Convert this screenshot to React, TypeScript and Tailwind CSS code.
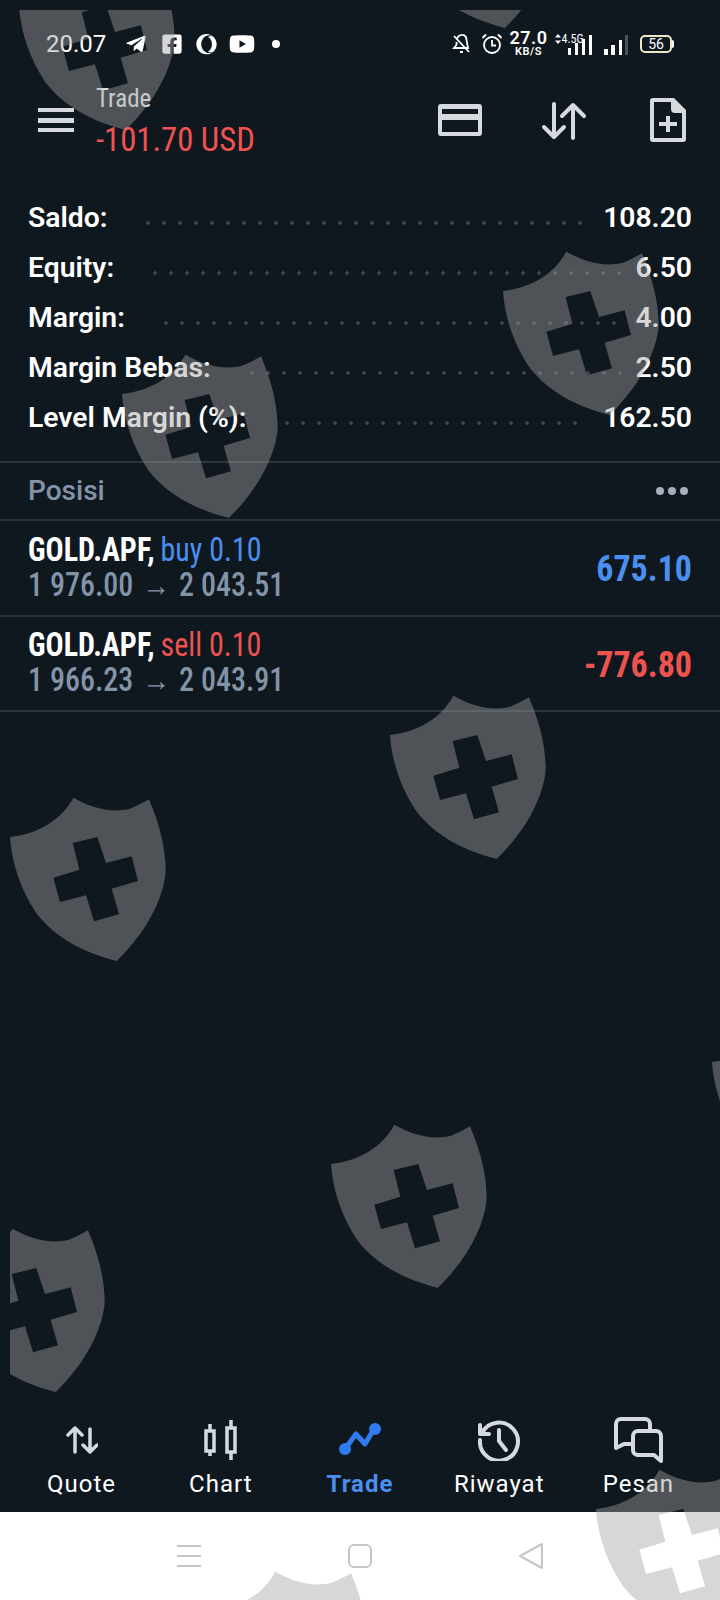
import { FaFacebookSquare, FaOpera, FaTelegramPlane, FaYoutube } from 'react-icons/fa';

const shieldSpots = [
  'left-[-1px] top-[-59px]',
  'left-[378px] top-[-161px]',
  'left-[483px] top-[226px]',
  'left-[102px] top-[329px]',
  'left-[370px] top-[670px]',
  'left-[-10px] top-[772px]',
  'left-[311px] top-[1099px]',
  'left-[-71px] top-[1203px]',
  'left-[692px] top-[997px]',
  'left-[576px] top-[1444px]',
  'left-[192px] top-[1546px]',
];

const account = [
  { label: 'Saldo:', value: '108.20' },
  { label: 'Equity:', value: '6.50' },
  { label: 'Margin:', value: '4.00' },
  { label: 'Margin Bebas:', value: '2.50' },
  { label: 'Level Margin (%):', value: '162.50' },
];

const positions = [
  { side: 'buy 0.10', prices: '1 976.00', now: '2 043.51', profit: '675.10', color: 'text-[#4a8ff0]' },
  { side: 'sell 0.10', prices: '1 966.23', now: '2 043.91', profit: '-776.80', color: 'text-[#ef5350]' },
];

function Shield({ className }: { className: string }) {
  return (
    <svg viewBox="0 0 540 570" className={`absolute h-[190px] w-[180px] ${className}`}>
      <path
        fillRule="evenodd"
        fill="#a3a3a3"
        fillOpacity="0.43"
        d="M30 165C110 155 180 120 220 47C270 75 330 95 390 80C410 72 430 62 447 52C480 130 497 200 497 270C490 350 440 450 350 537C250 510 170 470 110 395C60 320 35 240 30 165ZM218 183L292 165L318 243L395 223L414 297L335 320L357 397L282 418L258 340L180 360L160 287L238 263Z"
      />
    </svg>
  );
}

function StatusBar() {
  return (
    <div className="flex h-[88px] items-center pl-[46px] pr-[46px] text-white">
      <span className="text-[24px] leading-none font-normal">20.07</span>
      <div className="ml-[19px] flex items-center">
        <FaTelegramPlane className="h-[22px] w-[22px]" />
        <FaFacebookSquare className="ml-[14px] h-[22px] w-[22px]" />
        <FaOpera className="ml-[13px] h-[21px] w-[21px]" />
        <FaYoutube className="ml-[12px] h-[26px] w-[26px]" />
        <span className="ml-[17px] h-[8px] w-[8px] rounded-full bg-white" />
      </div>
      <div className="ml-auto flex items-center">
        <svg viewBox="0 0 20 22" className="h-[22px] w-[20px]" fill="none" stroke="white" strokeWidth="1.8">
          <path d="M5 7a5 5 0 0 1 9-3l2 11H2l2.500-3V9M8 19h3M2 3l15 16" />
        </svg>
        <svg viewBox="0 0 22 22" className="ml-[9px] h-[22px] w-[22px]" fill="none" stroke="white" strokeWidth="1.8">
          <circle cx="11" cy="12" r="8" />
          <path d="M11 7v5.500h4M1.500 5 5 1.500M20.500 5 17 1.500" />
        </svg>
        <div className="mb-[2px] ml-[9px] flex w-[34px] flex-col items-center font-semibold leading-none">
          <span className="text-[18px] leading-[17px] tracking-[0.5px]">27.0</span>
          <span className="text-[11px] leading-[11px] tracking-[0.5px]">KB/S</span>
        </div>
        <div className="relative ml-[9px] h-[22px] w-[37px]">
          <svg viewBox="0 0 6 10" className="absolute left-0 top-[1px] h-[10px] w-[6px]" fill="white">
            <path d="M3 0 6 3.500H0ZM3 10 0 6.500H6Z" />
          </svg>
          <span className="absolute left-[7px] top-0 text-[12px] leading-[12px] [font-stretch:condensed]">4.5G</span>
          <div className="absolute bottom-0 right-0 flex items-end gap-[4px]">
            <span className="h-[7px] w-[3px] bg-white" />
            <span className="h-[12px] w-[3px] bg-white" />
            <span className="h-[16px] w-[3px] bg-white" />
            <span className="h-[20px] w-[3px] bg-white" />
          </div>
        </div>
        <div className="ml-[12px] flex h-[22px] items-end gap-[3.500px]">
          <span className="h-[6px] w-[4px] bg-white" />
          <span className="h-[10px] w-[4px] bg-white" />
          <span className="h-[15px] w-[3px] bg-white" />
          <span className="h-[20px] w-[3px] bg-[#4a5058]" />
        </div>
        <div className="ml-[12px] flex items-center">
          <div className="flex h-[18px] w-[32px] items-center justify-center rounded-[5px] border-2 border-[#f0e6c8] text-[14px] leading-none">
            56
          </div>
          <span className="h-[8px] w-[2px] rounded-r bg-white" />
        </div>
      </div>
    </div>
  );
}

function Header() {
  return (
    <div className="flex h-[105px] items-start pl-[38px] pr-[34px]">
      <div className="mt-[20px] flex w-[36px] flex-col gap-[5.500px]">
        <span className="h-[4px] bg-[#d6dade]" />
        <span className="h-[5px] bg-[#d6dade]" />
        <span className="h-[4px] bg-[#d6dade]" />
      </div>
      <div className="ml-[22px] flex flex-col">
        <span className="text-[25px] leading-[22px] text-[#e2e5e8] [font-stretch:condensed]">Trade</span>
        <span className="mt-[13px] origin-left scale-x-[0.99] text-[33px] leading-[34px] text-[#ef5350] [font-stretch:condensed]">
          -101.70 USD
        </span>
      </div>
      <div className="ml-auto mt-[10px] flex items-start">
        <svg viewBox="0 0 44 32" className="mt-[6px] h-[32px] w-[44px]">
          <path
            fill="#d6dade"
            fillRule="evenodd"
            d="M3 0h38a3 3 0 0 1 3 3v26a3 3 0 0 1-3 3H3a3 3 0 0 1-3-3V3a3 3 0 0 1 3-3ZM4 5v5h36V5ZM4 16v12h36V16Z"
          />
        </svg>
        <svg
          viewBox="0 0 46 38"
          className="ml-[59px] mt-[4px] h-[38px] w-[46px]"
          fill="none"
          stroke="#d6dade"
          strokeWidth="4"
          strokeLinecap="round"
          strokeLinejoin="round"
        >
          <path d="M13 2v33M3 25l10 10 10-10M32 36V3M21 14 32 3l11 11" />
        </svg>
        <svg viewBox="0 0 36 44" className="ml-[63px] h-[44px] w-[36px]">
          <path
            fill="#d6dade"
            fillRule="evenodd"
            d="M3 0h21l12 12v29a3 3 0 0 1-3 3H3a3 3 0 0 1-3-3V3a3 3 0 0 1 3-3ZM4 4v36h28V15H25a4 4 0 0 1-4-4V4ZM16 18h4v6h7v4h-7v6h-4v-6H9v-4h7Z"
          />
        </svg>
      </div>
    </div>
  );
}

function AccountRow({ label, value }: { label: string; value: string }) {
  return (
    <div className="flex h-[50px] items-center text-[28.300px] font-semibold leading-none text-white [font-stretch:88%]">
      <span>{label}</span>
      <span className="ml-[33px] mr-[14px] mt-[9px] h-[4px] flex-1 bg-[radial-gradient(circle,#3d4650_1.500px,transparent_2px)] bg-[length:16px_4px] bg-repeat-x" />
      <span>{value}</span>
    </div>
  );
}

function PositionRow({ side, prices, now, profit, color }: (typeof positions)[number]) {
  return (
    <div className="flex h-[95.500px] items-center justify-between border-b-2 border-[#2c353e] pl-[28px] pr-[28px] pt-[1px]">
      <div className="flex origin-left scale-y-[1.08] flex-col text-[30px] leading-[32px] [font-stretch:condensed]">
        <div>
          <span className="font-bold text-white">GOLD.APF,</span>
          <span className={`ml-[6px] ${color}`}>{side}</span>
        </div>
        <div className="font-medium text-[#8494a8]">
          {prices} <span className="mx-[2px] text-[28px]">→</span> {now}
        </div>
      </div>
      <span className={`origin-right scale-y-[1.1] text-[34px] font-bold leading-none [font-stretch:condensed] ${color}`}>
        {profit}
      </span>
    </div>
  );
}

function Tab({ label, active, children }: { label: string; active?: boolean; children: React.ReactNode }) {
  return (
    <div className="flex flex-col items-center">
      <div className="flex h-[50px] items-center justify-center">{children}</div>
      <span
        className={`mt-[5px] text-[24px] leading-[28px] tracking-[1px] ${active ? 'font-bold text-[#4a8ff0]' : 'text-white'}`}
      >
        {label}
      </span>
    </div>
  );
}

function TabBar() {
  return (
    <div className="mt-auto grid h-[97px] grid-cols-5 px-[12px]">
      <Tab label="Quote">
        <svg
          viewBox="0 0 32 28"
          className="h-[28px] w-[32px]"
          fill="none"
          stroke="#d6dade"
          strokeWidth="3.500"
          strokeLinecap="round"
          strokeLinejoin="round"
        >
          <path d="M9 26V2M2 9l7-7 7 7M24 3v23M17 19l7 7 7-7" />
        </svg>
      </Tab>
      <Tab label="Chart">
        <svg viewBox="0 0 34 40" className="h-[40px] w-[34px]" fill="none" stroke="#d6dade" strokeWidth="3.500">
          <path d="M6 4V36M27 0V40" />
          <rect x="2" y="11" width="8" height="20" fill="#10181f" />
          <rect x="23" y="8" width="8" height="24" fill="#10181f" />
        </svg>
      </Tab>
      <Tab label="Trade" active>
        <svg viewBox="0 0 42 34" className="h-[34px] w-[42px]" fill="none">
          <path d="M6 26 17 11l9 10L35 6" stroke="#2f7bf0" strokeWidth="5" strokeLinejoin="round" />
          <circle cx="6" cy="26" r="6" fill="#2f7bf0" />
          <circle cx="36" cy="6" r="6" fill="#2f7bf0" />
        </svg>
      </Tab>
      <Tab label="Riwayat">
        <svg
          viewBox="0 0 42 42"
          className="h-[42px] w-[42px]"
          fill="none"
          stroke="#d6dade"
          strokeWidth="4"
          strokeLinecap="round"
          strokeLinejoin="round"
        >
          <path d="M4 14A19 19 0 1 1 2 21M2 6v9h9M21 11v11l7 9" />
        </svg>
      </Tab>
      <Tab label="Pesan">
        <svg
          viewBox="0 0 50 46"
          className="h-[46px] w-[50px]"
          fill="none"
          stroke="#d6dade"
          strokeWidth="4"
          strokeLinejoin="round"
        >
          <path d="M37 14V7a5 5 0 0 0-5-5H8a5 5 0 0 0-5 5v24l8-4h9" />
          <path d="M25 14h18a5 5 0 0 1 5 5v25l-7-6H25a5 5 0 0 1-5-5V19a5 5 0 0 1 5-5Z" />
        </svg>
      </Tab>
    </div>
  );
}

function SystemNav() {
  return (
    <div className="grid h-[88px] grid-cols-3 items-center bg-white px-[103px]">
      <div className="mx-auto flex w-[24px] flex-col gap-[8px]">
        <span className="h-[2px] bg-[#c6c6c6]" />
        <span className="h-[2px] bg-[#c6c6c6]" />
        <span className="h-[2px] bg-[#c6c6c6]" />
      </div>
      <div className="mx-auto h-[24px] w-[24px] rounded-[6px] border-2 border-[#c6c6c6]" />
      <svg viewBox="0 0 26 28" className="mx-auto h-[28px] w-[26px]" fill="none" stroke="#c6c6c6" strokeWidth="2" strokeLinejoin="round">
        <path d="M24 2v24L2 14Z" />
      </svg>
    </div>
  );
}

export default function App() {
  return (
    <div className="relative flex h-[1600px] w-[720px] flex-col overflow-hidden bg-[#10181f] [font-family:Roboto,sans-serif]">
      <StatusBar />
      <Header />
      <div className="pl-[28px] pr-[28px]">
        {account.map((row) => (
          <AccountRow key={row.label} {...row} />
        ))}
      </div>
      <div className="mt-[18px] flex h-[60px] items-center justify-between border-y-2 border-[#2c353e] pl-[28px] pr-[32px]">
        <span className="text-[28px] font-medium text-[#8494a8] [font-stretch:90%]">Posisi</span>
        <div className="flex gap-[4px]">
          <span className="h-[8px] w-[8px] rounded-full bg-[#a6b0bc]" />
          <span className="h-[8px] w-[8px] rounded-full bg-[#a6b0bc]" />
          <span className="h-[8px] w-[8px] rounded-full bg-[#a6b0bc]" />
        </div>
      </div>
      {positions.map((p) => (
        <PositionRow key={p.side} {...p} />
      ))}
      <TabBar />
      <SystemNav />
      {/* watermark sits above everything and starts 10px in from the corner */}
      <div className="pointer-events-none absolute bottom-0 left-[10px] right-0 top-[10px] overflow-hidden">
        {shieldSpots.map((spot) => (
          <Shield key={spot} className={spot} />
        ))}
      </div>
    </div>
  );
}
